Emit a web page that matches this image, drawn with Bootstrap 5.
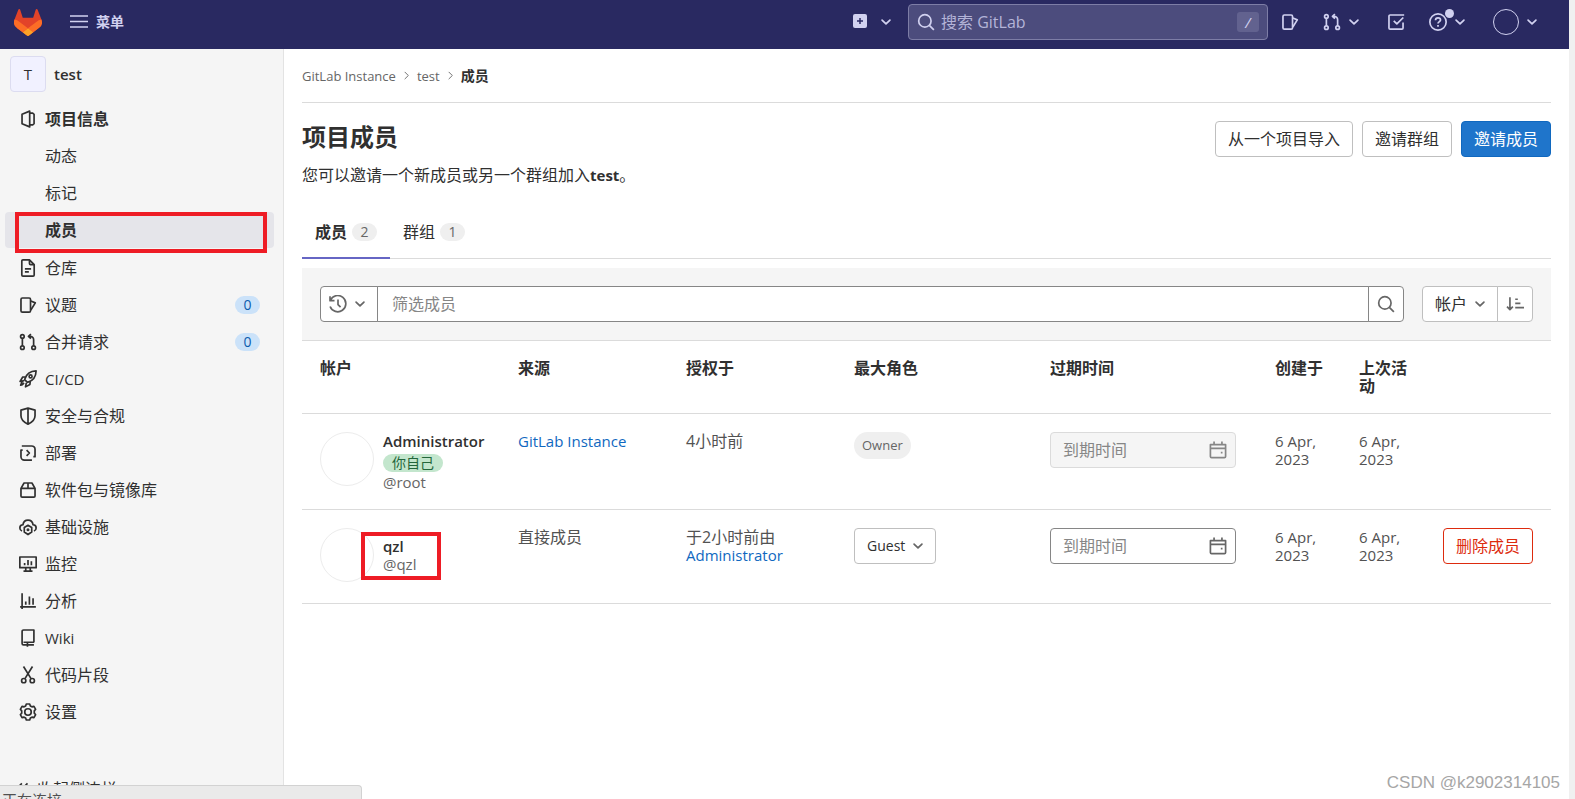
<!DOCTYPE html>
<html lang="zh-CN">
<head>
<meta charset="utf-8">
<meta name="viewport" content="width=device-width, initial-scale=1">
<title>成员 · test · GitLab</title>
<link href="https://cdn.jsdelivr.net/npm/bootstrap@5.3.0/dist/css/bootstrap.min.css" rel="stylesheet">
<style>
  body { font-family: "Open Sans", "Noto Sans CJK SC", sans-serif; font-size: 16px; line-height: 18px; color: #303030; border-right: 6px solid #f0f0f0; overflow: hidden; }
  a { text-decoration: none; color: #1068bf; }
  .latin { font-size: 15px; }
  .ico { width: 18px; height: 18px; flex: none; fill: none; stroke: currentColor; stroke-width: 1.5; stroke-linejoin: round; }
  .btn { font-size: 16px; line-height: 18px; height: 36px; padding: 0 12px; border-radius: 4px; white-space: nowrap; --bs-btn-color: #303030; --bs-btn-bg: #fff; --bs-btn-border-color: #bfbfbf; }
  .btn svg { color: #666; }
  .btn-blue { --bs-btn-color: #fff; --bs-btn-bg: #1f75cb; --bs-btn-border-color: #1068bf; }
  .btn-red { --bs-btn-color: #dd2b0e; --bs-btn-border-color: #dd2b0e; }
  .btn-guest { font-size: 14px; }
  .form-control { font-size: 16px; line-height: 18px; height: 36px; border-color: #868686; border-radius: 4px; }
  .form-control::placeholder { color: #868686; }

  .topbar { height: 49px; background: #292961; color: #d1d1f0; padding: 0 28px 5px 14px; }
  .topbar button { background: none; border: 0; padding: 0; color: inherit; display: flex; align-items: center; }
  .menu-label { font-size: 14px; font-weight: 700; }
  .search-box { width: 360px; height: 36px; background: #4c4c7d; border: 1px solid #7d7da6; border-radius: 4px; padding: 0 8px; margin: 0 13px 0 13px; }
  .search-box input { background: none; border: 0; outline: 0; color: #b9b9dd; min-width: 0; }
  .search-box input::placeholder { color: #b4b4d8; opacity: 1; }
  .key-hint { width: 22px; height: 20px; border-radius: 3px; background: #62628f; text-align: center; font-size: 15px; line-height: 20px; font-style: italic; }
  .user-ring { width: 26px; height: 26px; border: 1px solid #d1d1f0; border-radius: 50%; }
  .dot { position: absolute; width: 9px; height: 9px; border-radius: 50%; background: #d1d1f0; right: -7px; top: -4px; }

  .sidebar { width: 284px; background: #f5f5f5; border-right: 1px solid #e3e3e3; padding: 7px 9px 0 5px; flex: none; }
  .project-link { gap: 8px; margin: 0 0 9px 5px; }
  .project-tile { width: 36px; height: 36px; border: 1px solid #dcdcf0; border-radius: 4px; background: #f1f1ff; color: #303030; }
  .side-link { height: 36px; margin-bottom: 1px; padding: 0 14px; gap: 8px; border-radius: 4px; color: #303030; display: flex; align-items: center; }
  .side-sub { margin-bottom: 1px; }
  .side-sub .side-link { padding-left: 40px; }
  .side-link.current { background: #e5e5ea; position: relative; }
  .count-pill { font-size: 14px; line-height: 18px; width: 25px; border-radius: 9px; text-align: center; }
  .blue-pill { background: #cbe2f9; color: #0b5cad; }
  .gray-pill { background: #efefef; color: #666; }
  .outline-red { position: absolute; border: 4px solid #ee1c25; pointer-events: none; }
  .on-menu { left: 10px; right: 7px; top: 0; height: 41px; z-index: 2; }
  .on-member { left: -22px; top: -5px; width: 80px; height: 48px; }
  .fold { height: 20px; border: 0; background: none; padding: 0 0 0 9px; gap: 5px; color: #303030; }

  .page-main { padding: 0 18px; min-width: 0; }
  .crumbs { font-size: 14px; height: 54px; border-bottom: 1px solid #dbdbdb; color: #666; gap: 6px; }
  .crumbs a { color: #666; font-size: 13px; }
  .crumbs a.here { color: #303030; font-size: 14px; font-weight: 700; }
  .crumbs svg { width: 9px; height: 9px; stroke-width: 1; }
  .heading { padding-top: 18px; }
  .heading-text { padding-top: 1px; }
  .actions { gap: 9px; }
  h1 { font-size: 24px; line-height: 30px; font-weight: 700; margin: 0 0 14px; }
  .tabline { height: 54px; margin-top: 21px; border-bottom: 1px solid #dbdbdb; }
  .tabline a { height: 54px; padding: 0 13px; color: #303030; display: flex; align-items: center; gap: 5px; }
  .tabline a.current { border-bottom: 2px solid #6666c4; padding-top: 2px; font-weight: 600; }
  .tabline .count-pill { font-weight: 400; }
  .filter-bar { background: #f5f5f5; padding: 18px; margin-top: 9px; gap: 18px; border-bottom: 1px solid #dbdbdb; }
  .filter-bar .input-group .btn { --bs-btn-border-color: #868686; }
  .filter-bar .form-control { padding-left: 14px; }
  .members { table-layout: fixed; width: 100%; }
  .members th, .members td { padding: 18px; vertical-align: top; border-bottom: 1px solid #dbdbdb; }
  .members td { color: #525252; padding-right: 10px; }
  .members th { color: #303030; font-weight: 600; }
  .w-source { width: 168px; } .w-role { width: 196px; } .w-expiry { width: 225px; } .w-date { width: 84px; } .w-action { width: 126px; }
  .ring { width: 54px; height: 54px; border: 1px solid #ececec; border-radius: 50%; flex: none; }
  .who { gap: 9px; min-height: 57px; }
  .who strong { font-weight: 600; color: #303030; display: block; }
  .who small { color: #666; font-size: 15px; display: block; }
  .who-name { margin-bottom: 3px; }
  .you { font-size: 14px; line-height: 18px; background: #c3e6cd; color: #24663b; border-radius: 9px; padding: 0 9px; display: block; width: max-content; margin: 4px 0 1px; }
  .owner { font-size: 13px; line-height: 27px; border-radius: 14px; padding: 0 8px; display: inline-block; }
  .date-box { width: 186px; position: relative; color: #666; }
  .date-box svg { position: absolute; right: 9px; top: 9px; }
  .date-box .form-control:disabled { background: #f5f5f5; border-color: #dbdbdb; }
  .date-box .form-control:disabled + svg { color: #868686; }
  .loading-tip { position: absolute; left: 0; bottom: 0; width: 362px; height: 14px; overflow: hidden; background: #eaeaea; border: 1px solid #d2d2d2; border-width: 1px 1px 0 0; border-radius: 0 4px 0 0; font-size: 15px; line-height: 18px; padding: 5px 2px 0; color: #505050; z-index: 3; }
  .credit { position: absolute; right: 9px; bottom: 7px; font-family: "Liberation Sans", sans-serif; font-size: 17px; color: #a6a6a6; }
</style>
</head>
<body class="vh-100 d-flex flex-column position-relative">
<svg class="d-none" aria-hidden="true">
  <symbol id="chev" viewBox="0 0 16 16"><path d="M4.5 6.25 8 9.75l3.5-3.5" stroke-linecap="round"/></symbol>
  <symbol id="next" viewBox="0 0 10 10"><path d="M3 1l4 4-4 4"/></symbol>
  <symbol id="find" viewBox="0 0 16 16"><circle cx="7" cy="7" r="5.5"/><path d="M11 11l4 4"/></symbol>
  <symbol id="issues" viewBox="0 0 16 16"><rect x="1.75" y="1.75" width="8.5" height="12.5" rx="1.25"/><path d="M10.5 4.5l4 1.6-4 6.4"/></symbol>
  <symbol id="merge" viewBox="0 0 16 16"><circle cx="3" cy="3" r="1.6"/><circle cx="3" cy="13" r="1.6"/><circle cx="13" cy="13" r="1.6"/><path d="M3 4.6v6.8M13 11.4V6a3 3 0 0 0-3-3H8.5M10.6 1 8.4 3l2.2 2"/></symbol>
  <symbol id="todo" viewBox="0 0 16 16"><path d="M14.25 8.5v4.75a1 1 0 0 1-1 1H2.75a1 1 0 0 1-1-1V2.75a1 1 0 0 1 1-1h12.5M6 7l2.75 2.75L14.5 4"/></symbol>
  <symbol id="help" viewBox="0 0 16 16"><circle cx="8" cy="8" r="7.25"/><path d="M5.75 6.5C5.75 5 6.7 4.25 8 4.25s2.250.8 2.250 2C10.250 7.700 8 7.600 8 9.400M8 10.750v1.500"/></symbol>
  <symbol id="project" viewBox="0 0 16 16"><path d="M9.500 1 2.700 3.800v8.400L9.500 15zM9.500 2.800h2.700l1.200 1v8.400l-1.200 1H9.500"/></symbol>
  <symbol id="doc" viewBox="0 0 16 16"><path d="M9.300.75H3.500a1 1 0 0 0-1 1v12.500a1 1 0 0 0 1 1h9a1 1 0 0 0 1-1V5zM9.300.75V4a1 1 0 0 0 1 1h3.200M5.250 8.750h5.500M5.250 11.500h3.500"/></symbol>
  <symbol id="rocket" viewBox="0 0 16 16"><path d="M5 8.500C6.500 3.500 10 .9 15.200.8 15.100 6 12.500 9.500 7.500 11zM5 8.500l2.500 2.500M5.800 6 3.200 6.300 1 10.200 4.600 9.500M10 10.200l-.3 2.600-3.900 2.200.7-3.600M4.500 11.500 3 13M3 9.900l-1.500 3.600 2-.6"/><circle cx="10.300" cy="5.700" r="1.300"/></symbol>
  <symbol id="shield" viewBox="0 0 16 16"><path d="M8 1 1.750 2.750v5c0 3.500 3 6 6.250 7.500 3.250-1.500 6.250-4 6.250-7.500v-5zM8 1v14"/></symbol>
  <symbol id="deploy" viewBox="0 0 16 16"><path d="M2.500 1.750h8.750a3 3 0 0 1 3 3v6.500h-1.500M11.500 14.250H4.750a3 3 0 0 1-3-3V5.500h1.500M6.750 5.500 9.250 8l-2.500 2.500"/></symbol>
  <symbol id="package" viewBox="0 0 16 16"><path d="M1.750 6.500 4.500 1.750h7L14.250 6.500v6.750a1 1 0 0 1-1 1H2.750a1 1 0 0 1-1-1zM1.750 6.500h12.500M8 1.750V6.500"/></symbol>
  <symbol id="cloud" viewBox="0 0 16 16"><path d="M2.700 11.500C1.300 11 .75 9.900.75 8.800.75 7.200 1.900 6.100 3.500 6 3.900 3.500 5.700 1.900 8 1.900s4.100 1.600 4.500 4.100c1.600.1 2.750 1.200 2.750 2.800 0 1.100-.55 2.200-1.950 2.700"/><path d="M8 6.500l3.300 2v4L8 14.700l-3.300-2.200v-4z"/><circle cx="8" cy="10.500" r=".6"/></symbol>
  <symbol id="monitor" viewBox="0 0 16 16"><path d="M.75 1.750h14.500v9.500H.75zM4 14.250h8M6 11.250v3M10 11.250v3M5 7v2M8 4.500V9M11 5.500V9"/></symbol>
  <symbol id="chart" viewBox="0 0 16 16"><path d="M2.750 1v14M1 13.250h14M6 8.500v2.750M9.250 4v7.250M12.500 5.500v5.750"/></symbol>
  <symbol id="book" viewBox="0 0 16 16"><path d="M13.250 11.750V.9H4a1.250 1.250 0 0 0-1.250 1.250v10.700A1.250 1.250 0 0 0 4 14.100h9.250M13.500 11.750H4M7.500 11.750v4"/></symbol>
  <symbol id="cut" viewBox="0 0 16 16"><path d="M4 .5l6.700 10.700M12 .5 5.300 11.200"/><circle cx="4.200" cy="13" r="1.900"/><circle cx="11.800" cy="13" r="1.900"/></symbol>
  <symbol id="gear" viewBox="0 0 16 16"><path d="M6.500.9h3l.6 1.700 1.400.8 1.800-.4 1.500 2.600-1.200 1.400v2l1.200 1.400-1.500 2.600-1.800-.4-1.400.8-.6 1.700h-3l-.6-1.700-1.400-.8-1.800.4-1.500-2.600L2.400 9V7L1.200 5.600 2.700 3l1.800.4 1.400-.8z"/><circle cx="8" cy="8" r="2.900"/></symbol>
  <symbol id="fold" viewBox="0 0 16 16"><path d="M7 3 2 8l5 5M12 3 7 8l5 5"/></symbol>
  <symbol id="history" viewBox="0 0 16 16"><path d="M1.200 4.700A7.200 7.200 0 1 1 1 10.200M.9 1v4h4M8 4v4.500l2.300 2.300"/></symbol>
  <symbol id="sort" viewBox="0 0 16 16"><path d="M3.500 2v11M.9 10.300l2.600 2.700 2.600-2.700M8.200 3.750h2.300M8.200 7.500h4.600M8.200 11.250H16"/></symbol>
  <symbol id="cal" viewBox="0 0 16 16"><path d="M1.250 3.250h13.500v10.500a1 1 0 0 1-1 1H2.250a1 1 0 0 1-1-1zM1.250 6.500h13.500M4.500.5v3M11.500.5v3M10.500 10.250h1.500"/></symbol>
</svg>

<header class="topbar d-flex align-items-center flex-shrink-0">
  <a href="#" aria-label="GitLab"><svg class="d-block" width="28" height="27" viewBox="0 0 25 24"><path fill="#e24329" d="m24.507 9.500-.034-.09L21.082.562a.896.896 0 0 0-1.694.091l-2.290 7.010H7.825L5.535.653a.898.898 0 0 0-1.694-.09L.451 9.411.416 9.500a6.297 6.297 0 0 0 2.090 7.278l.012.010.030.022 5.160 3.867 2.560 1.935 1.554 1.176a1.051 1.051 0 0 0 1.268 0l1.555-1.176 2.560-1.935 5.197-3.890.014-.010A6.297 6.297 0 0 0 24.507 9.500Z"/><path fill="#fc6d26" d="m24.507 9.500-.034-.09a11.440 11.440 0 0 0-4.560 2.051l-7.447 5.632 4.742 3.584 5.197-3.890.014-.010A6.297 6.297 0 0 0 24.507 9.500Z"/><path fill="#fca326" d="m7.707 20.677 2.560 1.935 1.555 1.176a1.051 1.051 0 0 0 1.268 0l1.555-1.176 2.560-1.935-4.743-3.584-4.755 3.584Z"/><path fill="#fc6d26" d="M5.010 11.461a11.430 11.430 0 0 0-4.560-2.050L.416 9.500a6.297 6.297 0 0 0 2.090 7.278l.012.010.030.022 5.160 3.867 4.745-3.584-7.444-5.632Z"/></svg></a>
  <button type="button" class="ms-4 ps-1"><svg class="ico me-2" viewBox="0 0 18 18"><path d="M0 3h18M0 8.500h18M0 14h18"/></svg><span class="menu-label">菜单</span></button>
  <button type="button" class="ms-auto" aria-label="新建"><svg class="ico me-2" viewBox="0 0 18 18"><rect x="2" y="1" width="14" height="14" rx="2" fill="currentColor" stroke="none"/><path d="M9 5v6M6 8h6" stroke="#292961"/></svg><svg class="ico"><use href="#chev"/></svg></button>
  <label class="search-box d-flex align-items-center gap-1"><svg class="ico"><use href="#find"/></svg><input type="search" class="flex-grow-1" placeholder="搜索 GitLab" aria-label="搜索 GitLab"><span class="key-hint">/</span></label>
  <button type="button" aria-label="议题"><svg class="ico"><use href="#issues"/></svg></button>
  <button type="button" class="ms-4" aria-label="合并请求"><svg class="ico me-1"><use href="#merge"/></svg><svg class="ico"><use href="#chev"/></svg></button>
  <button type="button" class="ms-4" aria-label="待办"><svg class="ico"><use href="#todo"/></svg></button>
  <button type="button" class="ms-4" aria-label="帮助"><span class="position-relative d-flex me-1"><svg class="ico"><use href="#help"/></svg><span class="dot"></span></span><svg class="ico"><use href="#chev"/></svg></button>
  <button type="button" class="ms-4" aria-label="用户"><span class="user-ring me-1"></span><svg class="ico"><use href="#chev"/></svg></button>
</header>

<div class="d-flex flex-grow-1 overflow-hidden">
  <nav class="sidebar d-flex flex-column" aria-label="项目导航">
    <a href="#" class="project-link d-flex align-items-center text-reset"><span class="project-tile d-flex align-items-center justify-content-center latin">T</span><span class="latin fw-semibold">test</span></a>
    <a href="#" class="side-link fw-semibold"><svg class="ico"><use href="#project"/></svg>项目信息</a>
    <div class="side-sub">
      <a href="#" class="side-link">动态</a>
      <a href="#" class="side-link">标记</a>
      <a href="#" class="side-link current fw-semibold">成员<span class="outline-red on-menu"></span></a>
    </div>
    <a href="#" class="side-link"><svg class="ico"><use href="#doc"/></svg>仓库</a>
    <a href="#" class="side-link"><svg class="ico"><use href="#issues"/></svg>议题<span class="count-pill blue-pill ms-auto">0</span></a>
    <a href="#" class="side-link"><svg class="ico"><use href="#merge"/></svg>合并请求<span class="count-pill blue-pill ms-auto">0</span></a>
    <a href="#" class="side-link latin"><svg class="ico"><use href="#rocket"/></svg>CI/CD</a>
    <a href="#" class="side-link"><svg class="ico"><use href="#shield"/></svg>安全与合规</a>
    <a href="#" class="side-link"><svg class="ico"><use href="#deploy"/></svg>部署</a>
    <a href="#" class="side-link"><svg class="ico"><use href="#package"/></svg>软件包与镜像库</a>
    <a href="#" class="side-link"><svg class="ico"><use href="#cloud"/></svg>基础设施</a>
    <a href="#" class="side-link"><svg class="ico"><use href="#monitor"/></svg>监控</a>
    <a href="#" class="side-link"><svg class="ico"><use href="#chart"/></svg>分析</a>
    <a href="#" class="side-link latin"><svg class="ico"><use href="#book"/></svg>Wiki</a>
    <a href="#" class="side-link"><svg class="ico"><use href="#cut"/></svg>代码片段</a>
    <a href="#" class="side-link"><svg class="ico"><use href="#gear"/></svg>设置</a>
    <button type="button" class="fold mt-auto d-flex align-items-center"><svg class="ico"><use href="#fold"/></svg>收起侧边栏</button>
  </nav>

  <main class="page-main flex-grow-1">
    <nav class="crumbs d-flex align-items-center" aria-label="路径"><a href="#">GitLab Instance</a><svg class="ico"><use href="#next"/></svg><a href="#">test</a><svg class="ico"><use href="#next"/></svg><a href="#" class="here">成员</a></nav>

    <div class="heading d-flex justify-content-between align-items-start">
      <div class="heading-text">
        <h1>项目成员</h1>
        <p class="mb-0">您可以邀请一个新成员或另一个群组加入<b class="latin">test</b>。</p>
      </div>
      <div class="actions d-flex">
        <button type="button" class="btn">从一个项目导入</button>
        <button type="button" class="btn">邀请群组</button>
        <button type="button" class="btn btn-blue">邀请成员</button>
      </div>
    </div>

    <div class="tabline d-flex">
      <a href="#" class="current">成员<span class="count-pill gray-pill">2</span></a>
      <a href="#">群组<span class="count-pill gray-pill">1</span></a>
    </div>

    <div class="filter-bar d-flex">
      <div class="input-group flex-nowrap">
        <button type="button" class="btn d-flex align-items-center gap-1 px-2" aria-label="搜索历史"><svg class="ico"><use href="#history"/></svg><svg class="ico"><use href="#chev"/></svg></button>
        <input type="text" class="form-control" placeholder="筛选成员" aria-label="筛选成员">
        <button type="button" class="btn px-2" aria-label="搜索"><svg class="ico d-block"><use href="#find"/></svg></button>
      </div>
      <div class="btn-group flex-shrink-0">
        <button type="button" class="btn d-flex align-items-center gap-1 pe-2">帐户 <svg class="ico"><use href="#chev"/></svg></button>
        <button type="button" class="btn px-2" aria-label="排序方向"><svg class="ico d-block"><use href="#sort"/></svg></button>
      </div>
    </div>

    <table class="members">
      <colgroup><col><col class="w-source"><col class="w-source"><col class="w-role"><col class="w-expiry"><col class="w-date"><col class="w-date"><col class="w-action"></colgroup>
      <thead><tr><th>帐户</th><th>来源</th><th>授权于</th><th>最大角色</th><th>过期时间</th><th>创建于</th><th>上次活动</th><th></th></tr></thead>
      <tbody>
        <tr>
          <td><div class="who d-flex"><span class="ring"></span><div><strong class="latin">Administrator</strong><span class="you">你自己</span><small>@root</small></div></div></td>
          <td><a href="#" class="latin">GitLab Instance</a></td>
          <td>4小时前</td>
          <td><span class="owner gray-pill">Owner</span></td>
          <td><div class="date-box"><input type="text" class="form-control" placeholder="到期时间" aria-label="到期时间" disabled><svg class="ico"><use href="#cal"/></svg></div></td>
          <td class="latin">6 Apr, 2023</td><td class="latin">6 Apr, 2023</td><td></td>
        </tr>
        <tr>
          <td><div class="who d-flex"><span class="ring"></span><div class="who-name position-relative align-self-center"><strong class="latin">qzl</strong><small>@qzl</small><span class="outline-red on-member"></span></div></div></td>
          <td>直接成员</td>
          <td>于2小时前由<br><a href="#" class="latin">Administrator</a></td>
          <td><button type="button" class="btn btn-guest d-flex align-items-center gap-1 pe-2">Guest <svg class="ico"><use href="#chev"/></svg></button></td>
          <td><div class="date-box"><input type="text" class="form-control" placeholder="到期时间" aria-label="到期时间"><svg class="ico"><use href="#cal"/></svg></div></td>
          <td class="latin">6 Apr, 2023</td><td class="latin">6 Apr, 2023</td>
          <td><button type="button" class="btn btn-red">删除成员</button></td>
        </tr>
      </tbody>
    </table>
  </main>
</div>
<div class="loading-tip" role="status">正在连接...</div>
<div class="credit">CSDN @k2902314105</div>
<script src="https://cdn.jsdelivr.net/npm/bootstrap@5.3.0/dist/js/bootstrap.bundle.min.js"></script>
</body>
</html>
